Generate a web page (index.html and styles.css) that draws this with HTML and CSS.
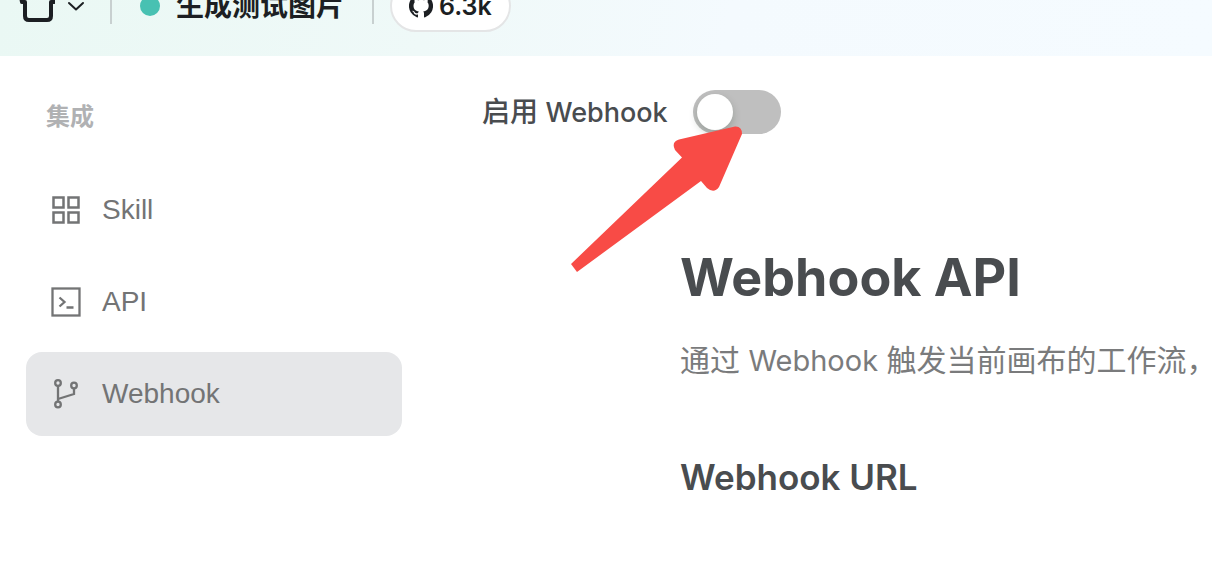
FILE: index.html
```html
<!DOCTYPE html>
<html lang="zh-CN">
<head>
    <meta charset="UTF-8">
    <meta name="viewport" content="width=device-width, initial-scale=1.0">
    <title>Webhook</title>
    <link rel="stylesheet" href="styles.css">
</head>
<body>
    <header class="topbar">
        <div class="topbar-inner">
            <button class="logo-button" type="button" aria-label="菜单">
                <svg width="36" height="36" viewBox="0 0 36 36" fill="none" stroke="#1c1f23" stroke-width="4" stroke-linejoin="round">
                    <path d="M12 4 L2 9 L3 14 L6 14 V28 Q6 32 10 32 H28 Q32 32 32 28 V14 L35 14 L36 9 L27 4 Q19.500 10 12 4 Z"/>
                </svg>
                <svg width="18" height="12" viewBox="0 0 18 12" fill="none" stroke="#1c1f23" stroke-width="2" stroke-linecap="round" stroke-linejoin="round">
                    <path d="M2 3 L9 9.500 L16 3"/>
                </svg>
            </button>
            <span class="divider"></span>
            <span class="status-dot"></span>
            <span class="project-name">生成测试图片</span>
            <span class="divider"></span>
            <a class="github-link" href="#">
                <svg width="24" height="24" viewBox="0 0 24 24">
                    <path fill="#1c1f23" d="M12 0 A12 12 0 0 0 8.200 23.400 C8.800 23.500 9 23.100 9 22.800 V20.600 C5.700 21.300 5 19.200 5 19.200 C4.500 17.800 3.700 17.500 3.700 17.500 C2.600 16.700 3.800 16.700 3.800 16.700 C5 16.800 5.600 18 5.600 18 C6.700 19.800 8.400 19.300 9.100 19 C9.200 18.200 9.500 17.700 9.900 17.400 C7.200 17.100 4.500 16 4.500 11.500 C4.500 10.200 5 9.100 5.700 8.200 C5.600 7.900 5.200 6.700 5.800 5.100 C5.800 5.100 6.800 4.700 9.100 6.300 A11.500 11.500 0 0 1 15.100 6.300 C17.400 4.700 18.400 5.100 18.400 5.100 C19 6.700 18.600 7.900 18.500 8.200 C19.300 9.100 19.700 10.200 19.700 11.500 C19.700 16 16.900 17.100 14.200 17.400 C14.700 17.700 15 18.400 15 19.400 V22.800 C15 23.100 15.200 23.500 15.800 23.400 A12 12 0 0 0 12 0 Z"/>
                </svg>
                <span>6.3k</span>
            </a>
        </div>
    </header>

    <div class="layout">
        <nav class="sidebar">
            <h3 class="sidebar-title">集成</h3>
            <a class="nav-item" href="#">
                <svg width="32" height="32" viewBox="0 0 32 32" fill="none" stroke="currentColor" stroke-width="2.500">
                    <rect x="3.500" y="3.500" width="10" height="10"/>
                    <rect x="18.500" y="3.500" width="10" height="10"/>
                    <rect x="3.500" y="18.500" width="10" height="10"/>
                    <rect x="18.500" y="18.500" width="10" height="10"/>
                </svg>
                <span>Skill</span>
            </a>
            <a class="nav-item" href="#">
                <svg width="32" height="32" viewBox="0 0 32 32" fill="none" stroke="currentColor" stroke-width="2.300">
                    <rect x="2.500" y="2.500" width="27" height="27"/>
                    <path d="M9.500 11.500 L14.500 16 L9.500 20.500 M16.500 21.500 H23.500"/>
                </svg>
                <span>API</span>
            </a>
            <a class="nav-item active" href="#">
                <svg width="32" height="32" viewBox="0 0 32 32" fill="none" stroke="currentColor" stroke-width="2.300">
                    <circle cx="8" cy="5" r="2.800"/>
                    <circle cx="8" cy="26.500" r="2.800"/>
                    <circle cx="24" cy="7.500" r="2.800"/>
                    <path d="M8 8 V23.500 M24 10.500 V16 L8 21"/>
                </svg>
                <span>Webhook</span>
            </a>
        </nav>

        <main class="content">
            <div class="enable-row">
                <label for="enableWebhook">启用 <span class="latin">Webhook</span></label>
                <div class="switch-wrap">
                    <input class="switch" type="checkbox" id="enableWebhook">
                    <svg class="arrow" width="176" height="150" viewBox="568 124 176 150" aria-hidden="true">
                        <path fill="#f84b46" d="M571 264 L682 157.500 L675 150 Q671 142 679 139.500 L735 126.500 Q742 126 742 134 L719 187 Q714 194 707 188 L701 181 L577 272 Z"/>
                    </svg>
                </div>
            </div>
            <article class="doc">
                <h1>Webhook API</h1>
                <p>通过 <span class="latin">Webhook</span> 触发当前画布的工作流，</p>
                <h2>Webhook URL</h2>
            </article>
        </main>
    </div>
</body>
</html>
```

FILE: styles.css
```css
* {
    box-sizing: border-box;
}
body {
    margin: 0;
    background: #fff;
    color: #494c4f;
    font-family: Inter, "Noto Sans CJK SC", sans-serif;
    overflow: hidden;
}

/* top bar, scrolled partly out of view */
.topbar {
    height: 56px;
    overflow: hidden;
    background: linear-gradient(100deg, #eaf8f4 0%, #eff9f8 35%, #f4fafe 60%, #f5fbff 100%);
}
.topbar-inner {
    display: flex;
    align-items: center;
    height: 100px;
    margin-top: -44px;
    padding-left: 19px;
    color: #1c1f23;
}
.logo-button {
    display: flex;
    align-items: center;
    gap: 12px;
    padding: 0;
    border: none;
    background: none;
    cursor: pointer;
}
.divider {
    width: 2px;
    height: 36px;
    margin: 0 28px 0 25px;
    background: #c8d0d0;
}
.status-dot {
    width: 20px;
    height: 20px;
    margin-right: 16px;
    border-radius: 50%;
    background: #48c1b2;
}
.project-name {
    font-size: 28px;
    font-weight: 700;
    line-height: 40px;
}
.project-name + .divider {
    margin: 0 16px 0 28px;
}
.github-link {
    display: flex;
    align-items: center;
    gap: 6px;
    height: 52px;
    padding: 0 17px;
    border: 2px solid #e4e5e6;
    border-radius: 26px;
    background: #fff;
    color: #1c1f23;
    font-size: 25px;
    font-weight: 600;
    text-decoration: none;
}

.layout {
    display: flex;
}
.sidebar {
    display: flex;
    flex-direction: column;
    flex: 0 0 402px;
    gap: 8px;
    padding: 42px 0 0 26px;
}
.sidebar-title {
    margin: 0 0 24px;
    padding-left: 20px;
    color: #b0b1b3;
    font-size: 24px;
    font-weight: 600;
    line-height: 38px;
}
.nav-item {
    display: flex;
    align-items: center;
    gap: 20px;
    height: 84px;
    padding: 0 24px;
    border-radius: 16px;
    color: #737475;
    font-family: "Liberation Sans", Arial, sans-serif;
    font-size: 28px;
    text-decoration: none;
}
.nav-item.active {
    background: #e6e7e9;
}

.content {
    flex: 1;
    min-width: 0;
    padding: 34px 0 0 80px;
}
.enable-row {
    display: flex;
    align-items: center;
    gap: 25px;
    height: 44px;
    font-size: 28px;
    font-weight: 500;
}
.enable-row label {
    line-height: 40px;
}
.enable-row .latin {
    font-size: 27px;
}
.switch-wrap {
    position: relative;
    height: 44px;
}
.switch {
    appearance: none;
    display: block;
    width: 88px;
    height: 44px;
    margin: 0;
    padding: 4px;
    border-radius: 22px;
    background: #bfbfbf;
    cursor: pointer;
}
.switch::before {
    content: "";
    display: block;
    width: 36px;
    height: 36px;
    border-radius: 50%;
    background: #fff;
    box-shadow: 0 4px 8px rgba(0, 35, 11, 0.2);
}
.switch:checked {
    background: #48c1b2;
}
.switch:checked::before {
    margin-left: 44px;
}
.arrow {
    position: absolute;
    top: 34px;
    right: 37px;
    pointer-events: none;
}

.doc {
    padding: 108px 0 0 198px;
    white-space: nowrap;
}
.doc h1 {
    margin: 0;
    font-size: 52px;
    font-weight: 700;
    line-height: 72px;
}
.doc p {
    margin: 22px 0 0;
    color: #7a7b7c;
    font-size: 30px;
    line-height: 48px;
}
.doc p .latin {
    font-size: 29px;
}
.doc h2 {
    margin: 68px 0 0;
    font-size: 35px;
    font-weight: 600;
    line-height: 48px;
}
```
